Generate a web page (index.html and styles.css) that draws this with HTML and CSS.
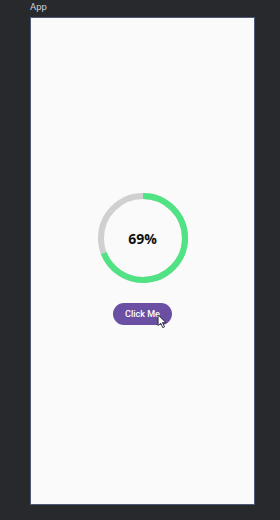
FILE: index.html
```html
<!DOCTYPE html>
<html lang="en">
<head>
    <meta charset="UTF-8">
    <meta name="viewport" content="width=device-width, initial-scale=1.0">
    <title>App</title>
    <link rel="stylesheet" href="styles.css">
</head>
<body>
    <div class="window-title">App</div>
    <div class="app">
        <div class="progress">
            <svg class="ring" viewBox="0 0 90 90" width="90" height="90">
                <circle cx="45" cy="45" r="42" fill="none" stroke="#d0d0d0" stroke-width="6"/>
                <circle cx="45" cy="45" r="42" fill="none" stroke="#4fe383" stroke-width="6"
                        stroke-dasharray="182.1 263.9" transform="rotate(-90 45 45)"/>
            </svg>
            <span class="progress-label">69%</span>
        </div>
        <div class="btn-wrap">
            <button class="click-btn">Click Me</button>
            <svg class="cursor" viewBox="0 0 12 17" width="11" height="15">
                <path d="M1 1 L1 13 L4 10.5 L6.3 15.5 L8.3 14.6 L6 9.8 L10 9.8 Z" fill="#fff" stroke="#222" stroke-width="1" stroke-linejoin="round"/>
            </svg>
        </div>
    </div>
</body>
</html>
```

FILE: styles.css
```css
* {
    margin: 0;
    padding: 0;
    box-sizing: border-box;
}

body {
    background: #27292d;
    font-family: 'Roboto', 'Liberation Sans', sans-serif;
    width: 280px;
    height: 520px;
    padding: 0 25px 0 30px;
}

.window-title {
    color: #d0d1d4;
    font-size: 9.5px;
    height: 17px;
    line-height: 14px;
}

.app {
    background: #fafafa;
    border: 1px solid #4f5a78;
    height: 488px;
    display: flex;
    flex-direction: column;
    align-items: center;
    justify-content: center;
    gap: 19px;
    padding-bottom: 4px;
}

.progress {
    position: relative;
    width: 90px;
    height: 90px;
}

.ring {
    display: block;
}

.progress-label {
    position: absolute;
    inset: 0;
    display: flex;
    align-items: center;
    justify-content: center;
    font-family: 'Open Sans', 'Liberation Sans', sans-serif;
    font-weight: 700;
    font-size: 14px;
    color: #111;
    padding-top: 1px;
}

.btn-wrap {
    position: relative;
}

.click-btn {
    background: #6a4fa3;
    color: #fff;
    border: none;
    border-radius: 11px;
    width: 59px;
    height: 22px;
    font-family: 'Roboto', 'Liberation Sans', sans-serif;
    font-size: 9px;
    font-weight: 500;
}

.cursor {
    position: absolute;
    left: 44px;
    top: 12px;
}
```
